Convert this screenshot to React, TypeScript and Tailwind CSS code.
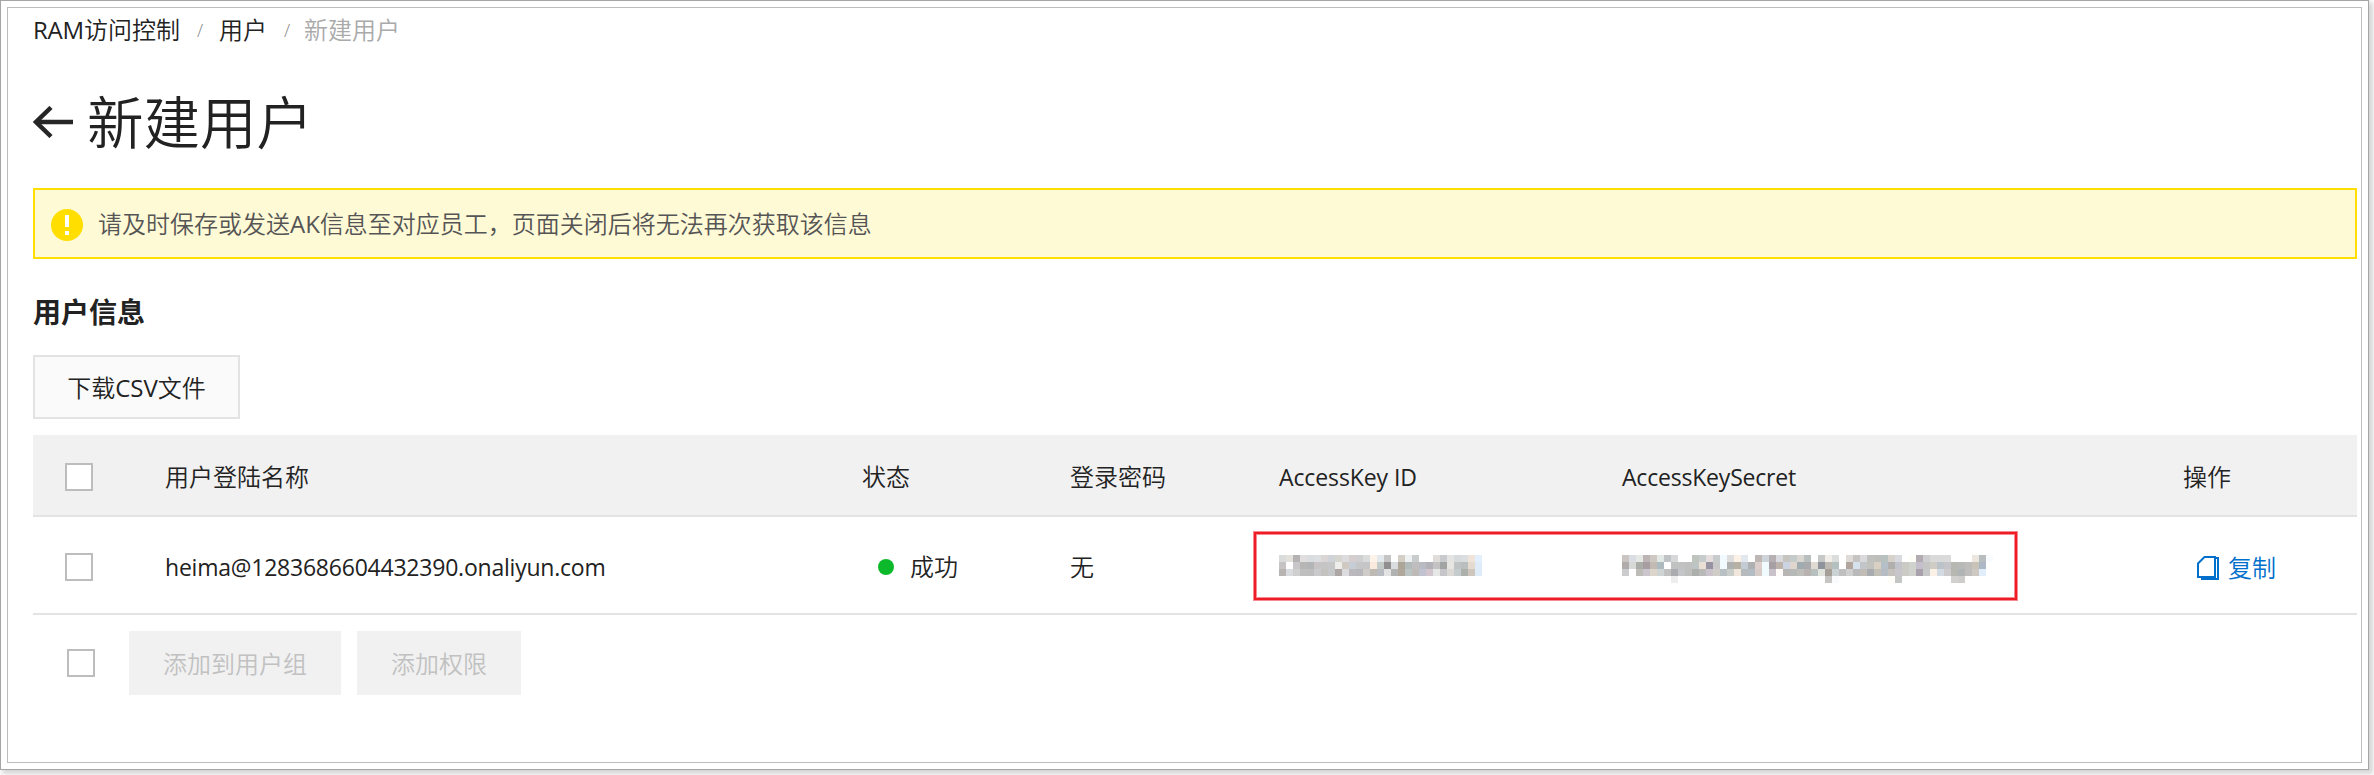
// Each row lists cell colours; a cell is 7px square, "-" is an empty one and "*n" repeats it.
const ID_ROWS = [
  'd9dcda e2e1dc b4b2b3 e1dee0 d9dde0 dcdfe1 d9d6d5 cfd2d6 d6d5cf dcdcde d4cfce cfcfd2 dadbdb fdf3e9 e3e9ec c5c5c6 - d3cec6 edf1f2 c8cccd - - e0ddda c8cacd e4e4e2 d8dbdd dadee0 efe3da e2effc',
  'c5c3c4 - c9c6c9 b8b6b5 b2b4b5 c8c3c5 c5c5c5 c5c6c5 eeede9 cfc9c2 c6cdd4 c6c6c9 c5c5c8 f9eadd c3cac8 908e8f dadde0 aea599 b3baba bfbdbd babac2 b2b2b8 c4c2c2 a0a5a4 e6e5e1 bfc3c3 b8bfbe e5dacf deebf8',
  'b8b4b1 dadbdf d0cfd0 bfbfbf bebebe cacacc c4c2bf c6c7c9 aca7a4 dcdcde bbb9be b8b7bb cfcbc8 bfb9b4 b9bcc1 e3e3e3 b1b3b2 b0a89d bcc4c4 bebab8 c0c3cf d2c5cd e5e8e6 c5c5ca dbd8d5 c5cccd adb0ab cec6bd deebf8',
]
const SECRET_ROWS = [
  'cac5c2 dadee2 e6e8e5 bdb5b5 cdc8c2 e3e9e7 c0c3c6 d8d8db - - c0c4bf c6cbcb e6dddf c7cbcb f1fbff dedede fbf1e7 e3e8ef - bfb7b5 ced2d9 b7b0b3 d9dadf c6c5c0 c5cbcb dad6d1 b9bfbf - c6c8c8 f1eeea dadddb - dfdbd8 c6c4c2 dadadd c0c0be bebfbb b9c0c0 d6d1cb d9d9e0 - fffdf8 b3abb2 cecdd0 dadada dadada dadada - - - ebe7df b8bebf f8fcff',
  'b0acab d8d9d7 abada9 a89da3 c3bbb3 adbac0 - c0c1c1 c2c2c2 c0c0c0 bcc5c3 ebdfd5 9893a2 c9c9c9 f1fbff afb0b0 b7b0a5 c3cbd5 afb0b2 dccfcb f1fbff a89fa5 bdb3aa ccd3e2 e0d5cc a0abb0 aaaaac dfdad2 8e939c bfb9b3 b4c0bf - b2a59d d6e1ed c2c6c8 c2c2be d8d0c3 b5bfc8 b1afad c3c4cb cccac5 cfd2cd c5becd c5c5c5 cfcbc5 bcc3c8 c5c5c9 b8b8b3 b8bab8 bfbdbb c9c2b7 acb8c5 -',
  'cccbce - bdbcb6 cbc5cd dcd5cb ced3d3 c1c1c1 acacb0 c4c5c8 bfc0be adafac b9bab7 cac3cc d0cdc9 b9c0c4 c9ceca f1e6dc b7babc b3bcc3 d7cbc8 f1fbff cac2ca fffcf9 b7b6b5 b7b9b9 bebeba b8b3b0 b8bfbf e0e2dc a69f98 cad2d3 bfbfc0 cfcfcf b7b9bb c1bdb6 a8abb0 c2c0b6 b6bcc3 c5c1bd c8c5cb cccac5 cfd2cd a8a0ab c5c7c9 fbf1e7 d3dae2 cdcacc b7b7b2 b1b4b4 bfbdbb cdc9c2 e1edfb -',
  '-*7 eeeeee -*21 c7c4c3 f8fcff -*7 fffdf8 c4c6c6 -*7 d3d1cf cfcdcc',
]

function cells(row: string): string[] {
  return row.split(' ').flatMap((c) => (c.startsWith('-*') ? Array(Number(c.slice(2))).fill('-') : [c]))
}

function Mosaic({ rows }: { rows: string[] }) {
  return (
    <div className="flex h-7 flex-col">
      {rows.map((row, y) => (
        <div key={y} className="flex">
          {cells(row).map((c, x) => (
            <i key={x} className="block size-[7px] shrink-0" style={{ background: c === '-' ? 'transparent' : '#' + c }} />
          ))}
        </div>
      ))}
    </div>
  )
}

function Checkbox() {
  return <span role="checkbox" aria-checked="false" className="block size-7 shrink-0 border-2 border-[#bdbdbd] bg-white" />
}

const COLS = 'grid grid-cols-[132px_697px_208px_209px_343px_561px_174px]'

export default function App() {
  return (
    <div className="h-[775px] w-[2374px] overflow-hidden bg-white font-['Open_Sans','Noto_Sans_CJK_SC',sans-serif] text-2xl leading-9 font-[350] text-[#222]">
      <div className="h-[770px] w-[2369px] border border-[#a5a5a5] bg-white p-1.5 shadow-[3px_3px_5px_1px_#d4d4d4]">
        <main className="flex h-[756px] flex-col border border-[#bdbdbd] pl-[25px] pr-1 whitespace-nowrap">
          <nav className="mt-1 flex h-9 items-center">
            <span className="w-[164px]"><span className="font-normal tracking-[-0.2px]">RAM</span>访问控制</span>
            <span className="w-[22px] text-lg text-[#888]">/</span>
            <span className="w-[65px]">用户</span>
            <span className="w-5 text-lg text-[#888]">/</span>
            <span className="text-[#aaa]">新建用户</span>
          </nav>

          <header className="mt-10 flex h-[68px] items-center">
            <svg className="mr-[14px] h-8 w-10" viewBox="0 0 40 32" fill="none" stroke="#262626">
              <path d="M3 16H40" strokeWidth="4.5" />
              <path d="M18 1.5L3 16l15 14.5" strokeWidth="4.5" />
            </svg>
            <h1 className="pt-0.5 text-[56.5px] font-[350] leading-none">新建用户</h1>
          </header>

          <div className="mt-8 flex h-[71px] shrink-0 items-center gap-[15px] border-2 border-[#ffde00] bg-[#fffad6] pl-4 text-[#555]">
            <svg className="mt-0.5 size-8" viewBox="0 0 32 32">
              <circle cx="16" cy="16" r="16" fill="#ffde00" />
              <path d="M14 6h4v12h-4zM14 22h4v4h-4z" fill="#fff" />
            </svg>
            <span>请及时保存或发送<span className="font-normal">AK</span>信息至对应员工，页面关闭后将无法再次获取该信息</span>
          </div>

          <h2 className="mt-[33px] h-10 text-[28px] font-bold leading-10">用户信息</h2>
          <button className="mt-[23px] h-16 w-[207px] shrink-0 border-2 border-[#e3e3e3] bg-[#fafafa] pt-0.5">下载<span className="font-normal">CSV</span>文件</button>

          <section className="mt-4">
            <div className={COLS + ' h-[82px] items-center border-b-2 border-[#e3e3e3] bg-[#f1f1f1] pt-1'}>
              <div className="pl-8"><Checkbox /></div>
              <div>用户登陆名称</div>
              <div>状态</div>
              <div>登录密码</div>
              <div className="text-[23px] font-normal tracking-[-0.1px]">AccessKey ID</div>
              <div className="text-[23px] font-normal tracking-[-0.2px]">AccessKeySecret</div>
              <div>操作</div>
            </div>
            <div className={COLS + ' relative h-[98px] items-center border-b-2 border-[#e3e3e3] pt-1'}>
              <div className="pl-8"><Checkbox /></div>
              <div className="text-[23px] font-normal tracking-[-0.22px]">heima@1283686604432390.onaliyun.com</div>
              <div className="flex items-center gap-4 pl-4">
                <i className="size-4 rounded-full bg-[#0cb92a]" />
                <span>成功</span>
              </div>
              <div>无</div>
              <div className="pt-1"><Mosaic rows={ID_ROWS} /></div>
              <div className="pt-1"><Mosaic rows={SECRET_ROWS} /></div>
              <a className="flex items-center gap-[9px] pt-0.5 pl-[14px] text-[#0070cc]">
                <svg className="h-6 w-[22px]" viewBox="0 0 22 24" fill="none" stroke="#0070cc" strokeWidth="2">
                  <path d="M7.5 1H18v20H1V7.5z" />
                  <path d="M4 23H21V2H18" />
                </svg>
                <span>复制</span>
              </a>
              <div className="absolute left-[1221px] top-[15px] h-[68px] w-[763px] border-2 border-[#ee1c25] shadow-[0_0_0_1px_#f78a90,inset_0_0_0_1px_#f78a90]" />
            </div>
            <div className="flex pt-4 pl-[34px]">
              <div className="mr-[34px] pt-[18px]"><Checkbox /></div>
              <button className="mr-4 h-16 w-[212px] bg-[#f1f1f1] pt-0.5 text-[#c1c1c1]">添加到用户组</button>
              <button className="h-16 w-[164px] bg-[#f1f1f1] pt-0.5 text-[#c1c1c1]">添加权限</button>
            </div>
          </section>
        </main>
      </div>
    </div>
  )
}
